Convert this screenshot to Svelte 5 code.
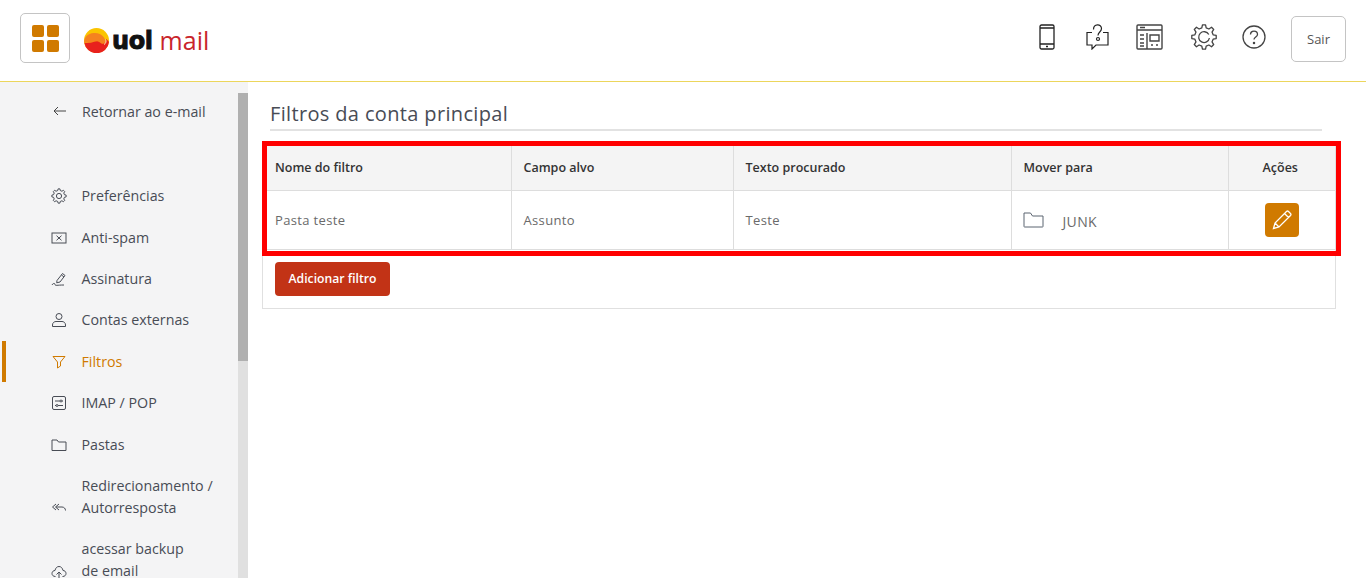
<script>
  const menu = [
    { label: ['Preferências'], icon: 'gear' },
    { label: ['Anti-spam'], icon: 'spam' },
    { label: ['Assinatura'], icon: 'sign' },
    { label: ['Contas externas'], icon: 'user' },
    { label: ['Filtros'], icon: 'filter', active: true },
    { label: ['IMAP / POP'], icon: 'imap' },
    { label: ['Pastas'], icon: 'folder' },
    { label: ['Redirecionamento /', 'Autorresposta'], icon: 'reply' },
    { label: ['acessar backup', 'de email'], icon: 'cloud' }
  ];

  // contorno de engrenagem
  function cog(c, outer, inner, teeth) {
    const pts = [];
    const step = (Math.PI * 2) / teeth;
    for (let i = 0; i < teeth; i++) {
      const a = i * step - Math.PI / 2;
      const w = step * 0.2;
      const at = (r, t) => `${(c + r * Math.cos(t)).toFixed(2)},${(c + r * Math.sin(t)).toFixed(2)}`;
      pts.push(at(inner, a - w * 1.5), at(outer, a - w * 0.8), at(outer, a + w * 0.8), at(inner, a + w * 1.5));
    }
    return pts.join(' ');
  }
</script>

<div class="page">
  <header class="top">
    <button class="apps" aria-label="Aplicativos">
      <span></span><span></span><span></span><span></span>
    </button>
    <div class="logo">
      <svg width="25" height="25" viewBox="0 0 25 25">
        <circle cx="12.5" cy="12.5" r="12.5" fill="#fbc400" />
        <path d="M.1 14C.2 9 4 5.500 9.500 5c4-.4 8 1 10.500 4.500 1 1.500 1.500 3 1 4.500-1 2-3 2-4.500 1-2-2-5-2-7.500-1-3 1-6 1.500-9 0z" fill="#f5821f" />
        <path d="M.2 14.500c3 1 6 .5 9-.5 2.500-1 5.500-1 7.500 1 1.500 1 3.500 1 4.500-1 .5-1 .5-2 .5-3 1.500.5 2.500 1.500 3.300 3A12.500 12.500 0 0 1 .2 14.500z" fill="#e8211d" />
        <path d="M21.500 11.500c1 1.500.5 4-1.500 5" fill="none" stroke="#fff0b0" stroke-width="1" />
      </svg>
      <span class="uol">uol</span>
      <span class="mail">mail</span>
    </div>
    <div class="tools">
      <svg class="phone" width="16" height="26" viewBox="0 0 16 26" fill="none" stroke="#222" stroke-width="1.300">
        <rect x="1" y="1" width="14" height="24" rx="1.500" /><path d="M1 20h14M1 4h14" /><path d="M7 22.500h2" />
      </svg>
      <svg class="ask" width="23" height="26" viewBox="0 0 23 26" fill="none" stroke="#222" stroke-width="1.200">
        <path d="M6 8.500H1v12.500h5v4l4-4h12V8.500h-5" />
        <path d="M7.500 5.500c0-6 8-6 8-1 0 3.500-3.500 3.500-3.500 7" /><circle cx="12" cy="15" r="1.500" />
      </svg>
      <svg class="layout" width="27" height="26" viewBox="0 0 27 26" fill="none" stroke="#444" stroke-width="1.400">
        <rect x="1" y="1" width="25" height="24" rx="1" /><path d="M1 6h25M11 9v16M14 11h9v6h-9zM4 3.500h5M4 11h4M4 15h4M4 19h4M4 22h4M15 21h2M20 21h2" />
      </svg>
      <svg class="cog" width="26" height="26" viewBox="0 0 26 26" fill="none" stroke="#444" stroke-width="1.300" stroke-linejoin="round">
        <polygon points={cog(13, 12.3, 9.4, 8)} />
        <path d="M17.800 10.500a5.400 5.400 0 1 0 .6 3.500" />
      </svg>
      <svg class="help" width="24" height="24" viewBox="0 0 24 24" fill="none" stroke="#444" stroke-width="1.300">
        <circle cx="12" cy="12" r="11" /><path d="M8.500 9.500c0-4.500 7-4.500 7 0 0 2.500-3.500 2.500-3.500 5" /><circle cx="12" cy="18" r=".6" />
      </svg>
      <button class="logout">Sair</button>
    </div>
  </header>

  <div class="body">
    <aside class="side">
      <nav class="nav">
        <a class="back" href="#top">
          <svg width="14" height="10" viewBox="0 0 14 10" fill="none" stroke="#444" stroke-width="1"><path d="M13 5H1M5 1 1 5l4 4" /></svg>
          <span>Retornar ao e-mail</span>
        </a>
        <ul>
          {#each menu as item}
            <li class:active={item.active} class:two={item.label.length > 1}>
              <svg class="mi" width="16" height="16" viewBox="0 0 16 16" fill="none" stroke="currentColor" stroke-width="1">
                {#if item.icon === 'gear'}
                  <polygon points={cog(8, 7.200, 5.600, 8)} stroke-linejoin="round" /><circle cx="8" cy="8" r="2.600" />
                {:else if item.icon === 'spam'}
                  <rect x="1" y="3" width="14" height="10" /><path d="M5.500 5.700l5 4.600M10.500 5.700l-5 4.600" />
                {:else if item.icon === 'sign'}
                  <path d="M6 9.500 11.500 2.500l2.500 2-5 6.500-3.300.8zM10.500 4l2.500 2" /><path d="M1 14c1-2 3-2 3-.5s2 .5 9 .5" />
                {:else if item.icon === 'user'}
                  <circle cx="8" cy="4.500" r="3" /><path d="M1.500 14.500v-1.500c0-2.500 2-3.500 3.500-3.500h6c1.500 0 3.500 1 3.500 3.500v1.500z" />
                {:else if item.icon === 'filter'}
                  <path d="M2 2.500h12L9.500 8v4l-3 2V8z" />
                {:else if item.icon === 'imap'}
                  <rect x="1.500" y="1.500" width="13" height="13" rx="1.500" /><path d="M4 6h5M11 6h1M4 10.500h1M7 10.500h5" /><circle cx="10" cy="6" r="1" /><circle cx="6" cy="10.500" r="1" />
                {:else if item.icon === 'folder'}
                  <path d="M1 13.500V3h5l1.500 2h7.500v8.500z" />
                {:else if item.icon === 'reply'}
                  <path d="M5 5 1.500 8 5 11M8 5 4.500 8 8 11M5 8h6c2 0 3.500 1.500 3.500 3.500" transform="translate(0 -2)" />
                {:else}
                  <path d="M4.500 12.500C2 12.500 1 11 1 9.500c0-2 1.500-3 3-3 .5-2.500 2-4 4-4s3.500 1.500 4 4c1.500 0 3 1 3 3 0 1.500-1 3-3.500 3" /><path d="M8 15V8M5.500 10.500 8 8l2.500 2.500" />
                {/if}
              </svg>
              <span class="lbl">
                {#each item.label as line}
                  <span>{line}</span>
                {/each}
              </span>
            </li>
          {/each}
        </ul>
      </nav>
      <div class="scroll"><div class="thumb"></div></div>
    </aside>

    <main class="content">
      <h1>Filtros da conta principal</h1>
      <div class="panel">
        <table>
          <thead>
            <tr>
              <th>Nome do filtro</th>
              <th>Campo alvo</th>
              <th>Texto procurado</th>
              <th>Mover para</th>
              <th class="center">Ações</th>
            </tr>
          </thead>
          <tbody>
            <tr>
              <td>Pasta teste</td>
              <td>Assunto</td>
              <td>Teste</td>
              <td>
                <span class="dest">
                  <svg width="21" height="16" viewBox="0 0 21 16" fill="none" stroke="#5b6470" stroke-width="1">
                    <path d="M1 14.500V1h6.500l2 3h10.500v10.500a.5.5 0 0 1-.5.5h-18a.5.5 0 0 1-.5-.5z" />
                  </svg>
                  <span class="junk">JUNK</span>
                </span>
              </td>
              <td class="center">
                <button class="edit" aria-label="Editar">
                  <svg width="20" height="20" viewBox="0 0 20 20" fill="none" stroke="#fff" stroke-width="1.300">
                    <path d="M1.500 18.500 3 13 14.500 1.500a1.500 1.500 0 0 1 2 0l2 2a1.500 1.500 0 0 1 0 2L7 17zM3 13l4 4M12.500 3.500l4 4" />
                  </svg>
                </button>
              </td>
            </tr>
          </tbody>
        </table>
        <button class="add">Adicionar filtro</button>
      </div>
      <div class="mark"></div>
    </main>
  </div>
</div>

<style>
  :global(body) {
    margin: 0;
    background: #fff;
    overflow: hidden;
  }

  .page {
    height: 578px;
    overflow: hidden;
    font-family: "Open Sans", "Liberation Sans", sans-serif;
    color: #484c55;
    display: flex;
    flex-direction: column;
  }

  .top {
    height: 81px;
    border-bottom: 1px solid #ecd65c;
    display: flex;
    padding: 0 20px;
    flex: none;
  }

  .apps {
    width: 50px;
    height: 50px;
    margin-top: 13px;
    box-sizing: border-box;
    background: #fff;
    border: 1px solid #c4c4c4;
    border-radius: 5px;
    padding: 0;
    display: grid;
    grid-template-columns: 12px 12px;
    grid-template-rows: 12px 12px;
    gap: 3px;
    justify-content: center;
    align-content: center;
  }

  .apps span {
    background: #d07a00;
    border-radius: 2px;
  }

  .logo {
    display: flex;
    align-items: center;
    margin-left: 14px;
    height: 81px;
  }

  .uol {
    font-family: "DejaVu Sans", sans-serif;
    font-weight: 700;
    font-size: 24px;
    color: #111;
    margin-left: 3px;
    letter-spacing: -0.4px;
    -webkit-text-stroke: 0.9px #111;
  }

  .mail {
    font-family: "Open Sans", sans-serif;
    font-size: 25px;
    color: #c9252b;
    margin-left: 7px;
    line-height: 1;
  }

  .tools {
    margin-left: auto;
    display: flex;
    align-items: flex-start;
  }

  .phone { margin-top: 24px; }
  .ask { margin: 24px 0 0 31px; }
  .layout { margin: 24px 0 0 27px; }
  .cog { margin: 24px 0 0 28px; }
  .help { margin: 25px 0 0 25px; }

  .logout {
    width: 55px;
    height: 46px;
    margin: 16px 0 0 25px;
    background: #fff;
    border: 1px solid #c4c4c4;
    border-radius: 5px;
    font: 13px "Open Sans", sans-serif;
    color: #555;
  }

  .body {
    flex: 1;
    display: flex;
    min-height: 0;
  }

  .side {
    width: 248px;
    flex: none;
    display: flex;
    background: #f4f4f5;
    overflow: hidden;
  }

  .nav {
    width: 238px;
    flex: none;
    padding-top: 18px;
  }

  .back {
    display: flex;
    align-items: center;
    gap: 15px;
    padding-left: 53px;
    font-size: 14.25px;
    color: inherit;
    text-decoration: none;
    height: 22px;
  }

  ul {
    list-style: none;
    margin: 53.5px 0 0;
    padding: 0;
  }

  li {
    height: 41.4px;
    display: flex;
    align-items: center;
    padding-left: 51px;
    font-size: 14.25px;
    position: relative;
    gap: 14.5px;
  }

  li.two {
    height: 44px;
    margin: 9.5px 0 19px;
    align-items: flex-end;
  }

  li.two .mi {
    margin-bottom: 2px;
  }

  li.active {
    color: #d07a00;
  }

  li.active::before {
    content: "";
    position: absolute;
    left: 2px;
    top: 0;
    bottom: 0;
    width: 4px;
    background: #d07a00;
  }

  .mi {
    flex: none;
  }

  .lbl {
    display: flex;
    flex-direction: column;
    line-height: 22px;
  }

  .scroll {
    width: 10px;
    margin-top: 11px;
    background: #e0e0e0;
  }

  .thumb {
    height: 268px;
    background: #b0b0b0;
  }

  .content {
    flex: 1;
    position: relative;
    padding-left: 14px;
    padding-right: 30px;
  }

  h1 {
    font-size: 20px;
    font-weight: 400;
    margin: 0 14px 0 8px;
    height: 47px;
    line-height: 64px;
    border-bottom: 2px solid #e2e2e2;
    letter-spacing: 0.35px;
  }

  .panel {
    margin-top: 14px;
    border: 1px solid #e0e0e0;
    height: 164px;
    box-sizing: border-box;
  }

  table {
    width: 100%;
    border-collapse: collapse;
    table-layout: fixed;
  }

  th, td {
    box-sizing: border-box;
    border: 1px solid #ddd;
    padding: 0 12px;
    text-align: left;
  }

  tr > :first-child { border-left: 0; width: 248px; }
  tr > :nth-child(2) { width: 222px; }
  tr > :nth-child(3) { width: 278px; }
  tr > :nth-child(4) { width: 217px; }
  tr > :last-child { border-right: 0; }

  th {
    background: #f4f4f4;
    height: 44px;
    border-top: 0;
    font-size: 12.5px;
    font-weight: 600;
    color: #333;
  }

  th.center {
    padding: 0 15px 0 12px;
  }

  td {
    height: 59px;
    font-size: 13px;
    letter-spacing: 0.35px;
    color: #6a6a6a;
  }

  .center {
    text-align: center;
  }

  .dest {
    display: flex;
    align-items: center;
    gap: 19px;
    margin-left: -1px;
  }

  .junk {
    position: relative;
    top: 2px;
    font-size: 14px;
  }

  .edit {
    width: 34px;
    height: 34px;
    border: 0;
    border-radius: 4px;
    background: #d07a00;
    padding: 0;
    display: inline-flex;
    align-items: center;
    justify-content: center;
    vertical-align: middle;
  }

  .add {
    margin: 12px 0 0 12px;
    height: 34px;
    width: 115px;
    border: 0;
    border-radius: 4px;
    background: #c23316;
    color: #fff;
    font: 600 12.2px "Open Sans", sans-serif;
    padding: 0;
  }

  .mark {
    position: absolute;
    left: 14px;
    top: 59px;
    width: 1069px;
    height: 105px;
    border: 5px solid #f00;
    pointer-events: none;
  }
</style>
